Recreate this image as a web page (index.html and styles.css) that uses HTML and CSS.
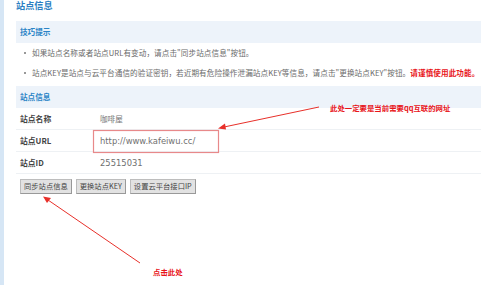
FILE: index.html
```html
<!DOCTYPE html>
<html lang="zh">
<head>
<meta charset="utf-8">
<link rel="stylesheet" href="styles.css">
</head>
<body>
<div class="page">
  <div class="side"></div>
  <div class="main">
    <h1 class="title">站点信息</h1>
    <div class="panel">
      <div class="panel-head">技巧提示</div>
      <ul class="tips">
        <li>如果站点名称或者站点URL有变动，请点击"同步站点信息"按钮。</li>
        <li>站点KEY是站点与云平台通信的验证密钥，若近期有危险操作泄漏站点KEY等信息，请点击"更换站点KEY"按钮。<span class="warn">请谨慎使用此功能。</span></li>
      </ul>
    </div>
    <div class="panel info">
      <div class="panel-head">站点信息</div>
      <div class="row"><span class="label">站点名称</span><span class="value">咖啡屋</span></div>
      <div class="row"><span class="label">站点URL</span><span class="value url">http://www.kafeiwu.cc/</span></div>
      <div class="row"><span class="label">站点ID</span><span class="value num">25515031</span></div>
    </div>
    <div class="buttons">
      <button class="btn">同步站点信息</button>
      <button class="btn">更换站点KEY</button>
      <button class="btn">设置云平台接口IP</button>
    </div>
  </div>
  <svg class="notes" width="481" height="285" viewBox="0 0 481 285">
    <rect x="93.5" y="130.5" width="125" height="22" fill="none" stroke="#e8898a" stroke-width="1.2"/>
    <line x1="319" y1="107" x2="224" y2="127" stroke="#e8302a" stroke-width="1"/>
    <polygon points="218,128.5 225,123.5 226,129.5" fill="#e8302a"/>
    <line x1="140" y1="263" x2="48" y2="200" stroke="#e8302a" stroke-width="1"/>
    <polygon points="43,196.5 51,198 47,203" fill="#e8302a"/>
  </svg>
  <div class="note note-url">此处一定要是当前需要qq互联的网址</div>
  <div class="note note-click">点击此处</div>
</div>
</body>
</html>
```
FILE: styles.css
```css
html, body {
  margin: 0;
  padding: 0;
  background: #fff;
}
body {
  width: 481px;
  height: 285px;
  overflow: hidden;
  font-family: "DejaVu Sans", "Noto Sans CJK SC", sans-serif;
  font-size: 7.6px;
  color: #666;
}
.page {
  position: relative;
  display: flex;
  width: 481px;
  height: 285px;
}
.side {
  width: 4px;
  flex: none;
  background: #d6e6f5;
}
.main {
  flex: 1;
  padding-left: 12px;
}
.title {
  margin: 0;
  height: 12px;
  line-height: 10px;
  font-size: 9.2px;
  font-weight: bold;
  color: #2b7fc3;
  font-family: "Noto Sans CJK SC", sans-serif;
}
.panel {
  margin-top: 9px;
}
.panel-head {
  height: 22px;
  line-height: 22px;
  background: #edf3fa;
  padding-left: 4px;
  font-weight: bold;
  font-size: 7.6px;
  color: #2b84c6;
  font-family: "Noto Sans CJK SC", sans-serif;
}
.tips {
  list-style: none;
  margin: 0;
  padding: 0;
}
.tips li {
  position: relative;
  height: 20px;
  line-height: 20px;
  padding-left: 16px;
  white-space: nowrap;
  color: #6a6a6a;
  font-family: "Noto Sans CJK SC", sans-serif;
  font-size: 7.6px;
  letter-spacing: 0.08px;
}
.tips li::before {
  content: "";
  position: absolute;
  left: 8px;
  top: 9px;
  width: 2px;
  height: 2px;
  background: #999;
}
.warn {
  color: #e8141a;
  font-weight: bold;
}
.info {
  margin-top: 3px;
}
.row {
  display: flex;
  align-items: center;
  height: 21px;
  border-bottom: 1px solid #eef1f4;
  padding-left: 4px;
}
.row:first-of-type {
  height: 23px;
}
.label {
  width: 80px;
  flex: none;
  color: #444;
  font-weight: bold;
  font-size: 7.8px;
  font-family: "Noto Sans CJK SC", sans-serif;
}
.value {
  color: #777;
  font-size: 7.6px;
  font-family: "Noto Sans CJK SC", sans-serif;
}
.url, .num {
  font-family: "DejaVu Sans", sans-serif;
  font-size: 8.4px;
  color: #707070;
}
.buttons {
  display: flex;
  gap: 4px;
  padding: 5px 0 0 4px;
}
.btn {
  height: 15px;
  padding: 0 3px;
  margin: 0;
  border: 1px solid #bdbdbd;
  border-right-color: #999;
  border-bottom-color: #999;
  background: #e2e2e2;
  color: #444;
  font-size: 7.3px;
  font-family: "Noto Sans CJK SC", sans-serif;
  line-height: 13px;
}
.notes {
  position: absolute;
  left: 0;
  top: 0;
  pointer-events: none;
}
.note {
  position: absolute;
  color: #e8141a;
  font-weight: bold;
  font-size: 7.4px;
  font-family: "Noto Sans CJK SC", sans-serif;
  white-space: nowrap;
}
.note-url {
  left: 330px;
  top: 102px;
}
.note-click {
  left: 153px;
  top: 266px;
}
```
